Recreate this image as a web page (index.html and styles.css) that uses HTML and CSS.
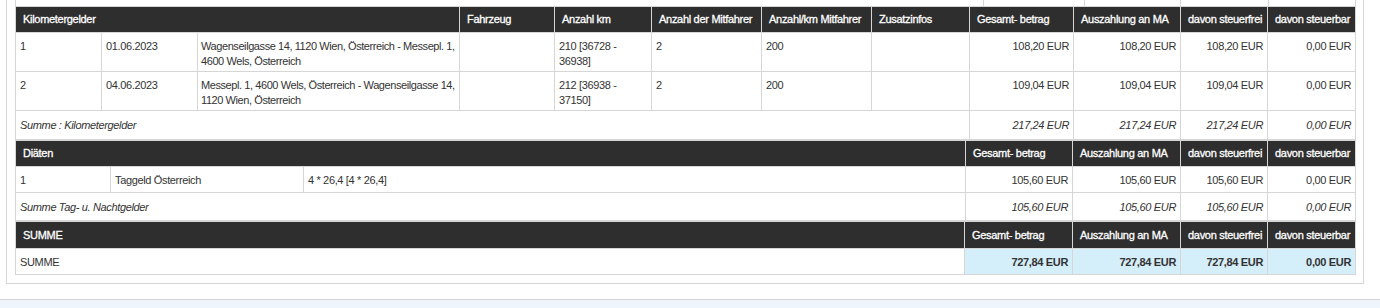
FILE: index.html
```html
<!DOCTYPE html>
<html lang="de">
<head>
<meta charset="utf-8">
<title>Reisekosten</title>
<link rel="stylesheet" href="styles.css">
</head>
<body>
<div class="panel">
  <table class="grid stub">
    <colgroup><col class="s1"><col class="s2"><col class="s3"><col class="s4"><col class="s5"></colgroup>
    <tr><td></td><td></td><td></td><td></td><td></td></tr>
  </table>

  <table class="grid">
    <colgroup>
      <col class="k1"><col class="k2"><col class="k3"><col class="k4"><col class="k5"><col class="k6">
      <col class="k7"><col class="k8"><col class="k9"><col class="k10"><col class="k11"><col class="k12">
    </colgroup>
    <tr class="head">
      <th colspan="3">Kilometergelder</th>
      <th>Fahrzeug</th>
      <th>Anzahl km</th>
      <th>Anzahl der Mitfahrer</th>
      <th>Anzahl/km Mitfahrer</th>
      <th>Zusatzinfos</th>
      <th>Gesamt- betrag</th>
      <th>Auszahlung an MA</th>
      <th>davon steuerfrei</th>
      <th>davon steuerbar</th>
    </tr>
    <tr class="row two">
      <td>1</td>
      <td>01.06.2023</td>
      <td class="addr">Wagenseilgasse 14, 1120 Wien, Österreich - Messepl. 1, 4600 Wels, Österreich</td>
      <td></td>
      <td>210 [36728 - 36938]</td>
      <td>2</td>
      <td>200</td>
      <td></td>
      <td class="num">108,20 EUR</td>
      <td class="num">108,20 EUR</td>
      <td class="num">108,20 EUR</td>
      <td class="num">0,00 EUR</td>
    </tr>
    <tr class="row two">
      <td>2</td>
      <td>04.06.2023</td>
      <td class="addr">Messepl. 1, 4600 Wels, Österreich - Wagenseilgasse 14, 1120 Wien, Österreich</td>
      <td></td>
      <td>212 [36938 - 37150]</td>
      <td>2</td>
      <td>200</td>
      <td></td>
      <td class="num">109,04 EUR</td>
      <td class="num">109,04 EUR</td>
      <td class="num">109,04 EUR</td>
      <td class="num">0,00 EUR</td>
    </tr>
    <tr class="row sum sum-k">
      <td colspan="8">Summe : Kilometergelder</td>
      <td class="num">217,24 EUR</td>
      <td class="num">217,24 EUR</td>
      <td class="num">217,24 EUR</td>
      <td class="num">0,00 EUR</td>
    </tr>
  </table>

  <table class="grid">
    <colgroup>
      <col class="d1"><col class="d2"><col class="d3"><col class="d4"><col class="d5"><col class="d6"><col class="d7">
    </colgroup>
    <tr class="head">
      <th colspan="3">Diäten</th>
      <th>Gesamt- betrag</th>
      <th>Auszahlung an MA</th>
      <th>davon steuerfrei</th>
      <th>davon steuerbar</th>
    </tr>
    <tr class="row one">
      <td>1</td>
      <td>Taggeld Österreich</td>
      <td>4 * 26,4 [4 * 26,4]</td>
      <td class="num">105,60 EUR</td>
      <td class="num">105,60 EUR</td>
      <td class="num">105,60 EUR</td>
      <td class="num">0,00 EUR</td>
    </tr>
    <tr class="row sum sum-d">
      <td colspan="3">Summe Tag- u. Nachtgelder</td>
      <td class="num">105,60 EUR</td>
      <td class="num">105,60 EUR</td>
      <td class="num">105,60 EUR</td>
      <td class="num">0,00 EUR</td>
    </tr>
  </table>

  <table class="grid">
    <colgroup>
      <col class="t1"><col class="t2"><col class="t3"><col class="t4"><col class="t5">
    </colgroup>
    <tr class="head head-total">
      <th>SUMME</th>
      <th>Gesamt- betrag</th>
      <th>Auszahlung an MA</th>
      <th>davon steuerfrei</th>
      <th>davon steuerbar</th>
    </tr>
    <tr class="row one total">
      <td>SUMME</td>
      <td class="num hl">727,84 EUR</td>
      <td class="num hl">727,84 EUR</td>
      <td class="num hl">727,84 EUR</td>
      <td class="num hl">0,00 EUR</td>
    </tr>
  </table>
</div>
<div class="footer-band"></div>
</body>
</html>
```

FILE: styles.css
```css
html, body {
  margin: 0;
  padding: 0;
  background: #ffffff;
}

body {
  font-family: "Liberation Sans", Arial, sans-serif;
  font-size: 11px;
  letter-spacing: -0.35px;
  color: #333333;
  height: 308px;
  overflow: hidden;
}

.panel {
  box-sizing: border-box;
  width: 1358px;
  margin-left: 6px;
  border: 1px solid #d6d6d6;
  border-top: 0;
  padding: 0 8px 8px 8px;
}

.grid {
  width: 1340px;
  border-collapse: collapse;
  table-layout: fixed;
}

.grid td,
.grid th {
  border: 1px solid #d6d6d6;
  overflow: hidden;
}

/* stub of the previous table, cut off at the top */
.stub td {
  height: 6px;
  padding: 0;
  border-top: 0;
  border-bottom: 0;
}
.stub tr { height: 6px; }
.s1 { width: 968px; }
.s2 { width: 101px; }
.s3 { width: 96px; }
.s4 { width: 88px; }
.s5 { width: 87px; }

/* Kilometergelder columns */
.k1 { width: 86px; }
.k2 { width: 96px; }
.k3 { width: 262px; }
.k4 { width: 95px; }
.k5 { width: 97px; }
.k6 { width: 110px; }
.k7 { width: 110px; }
.k8 { width: 98px; }
.k9 { width: 104px; }
.k10 { width: 107px; }
.k11 { width: 87px; }
.k12 { width: 88px; }

/* Diäten columns */
.d1 { width: 95px; }
.d2 { width: 193px; }
.d3 { width: 662px; }
.d4 { width: 107px; }
.d5 { width: 108px; }
.d6 { width: 87px; }
.d7 { width: 88px; }

/* Summe columns */
.t1 { width: 949px; }
.t2 { width: 108px; }
.t3 { width: 108px; }
.t4 { width: 87px; }
.t5 { width: 88px; }

.head th {
  background: #2e2e2e;
  color: #ffffff;
  font-weight: normal;
  text-align: left;
  white-space: nowrap;
  padding: 0 7px;
  line-height: 15px;
  letter-spacing: -0.3px;
  border-color: #d6d6d6;
  -webkit-text-stroke: 0.3px #ffffff;
}
.head { height: 26px; }
.head-total { height: 27px; }

.row td {
  vertical-align: top;
  line-height: 15px;
  padding: 6px 4px 2px 4px;
}
.row td.addr {
  padding-left: 3px;
  padding-right: 2px;
  letter-spacing: -0.42px;
}
.row.two { height: 39px; }
.row.one { height: 26px; }

.row.sum td {
  font-style: italic;
  padding-top: 7px;
}
.sum-k { height: 29px; }
.sum-d { height: 28px; }

.num {
  text-align: right;
  white-space: nowrap;
}

.total .hl {
  background: #d4eefa;
  font-weight: bold;
}

.footer-band {
  margin-top: 15px;
  height: 20px;
  border-top: 1px solid #d4d4d4;
  background: #eef5fd;
}
```
